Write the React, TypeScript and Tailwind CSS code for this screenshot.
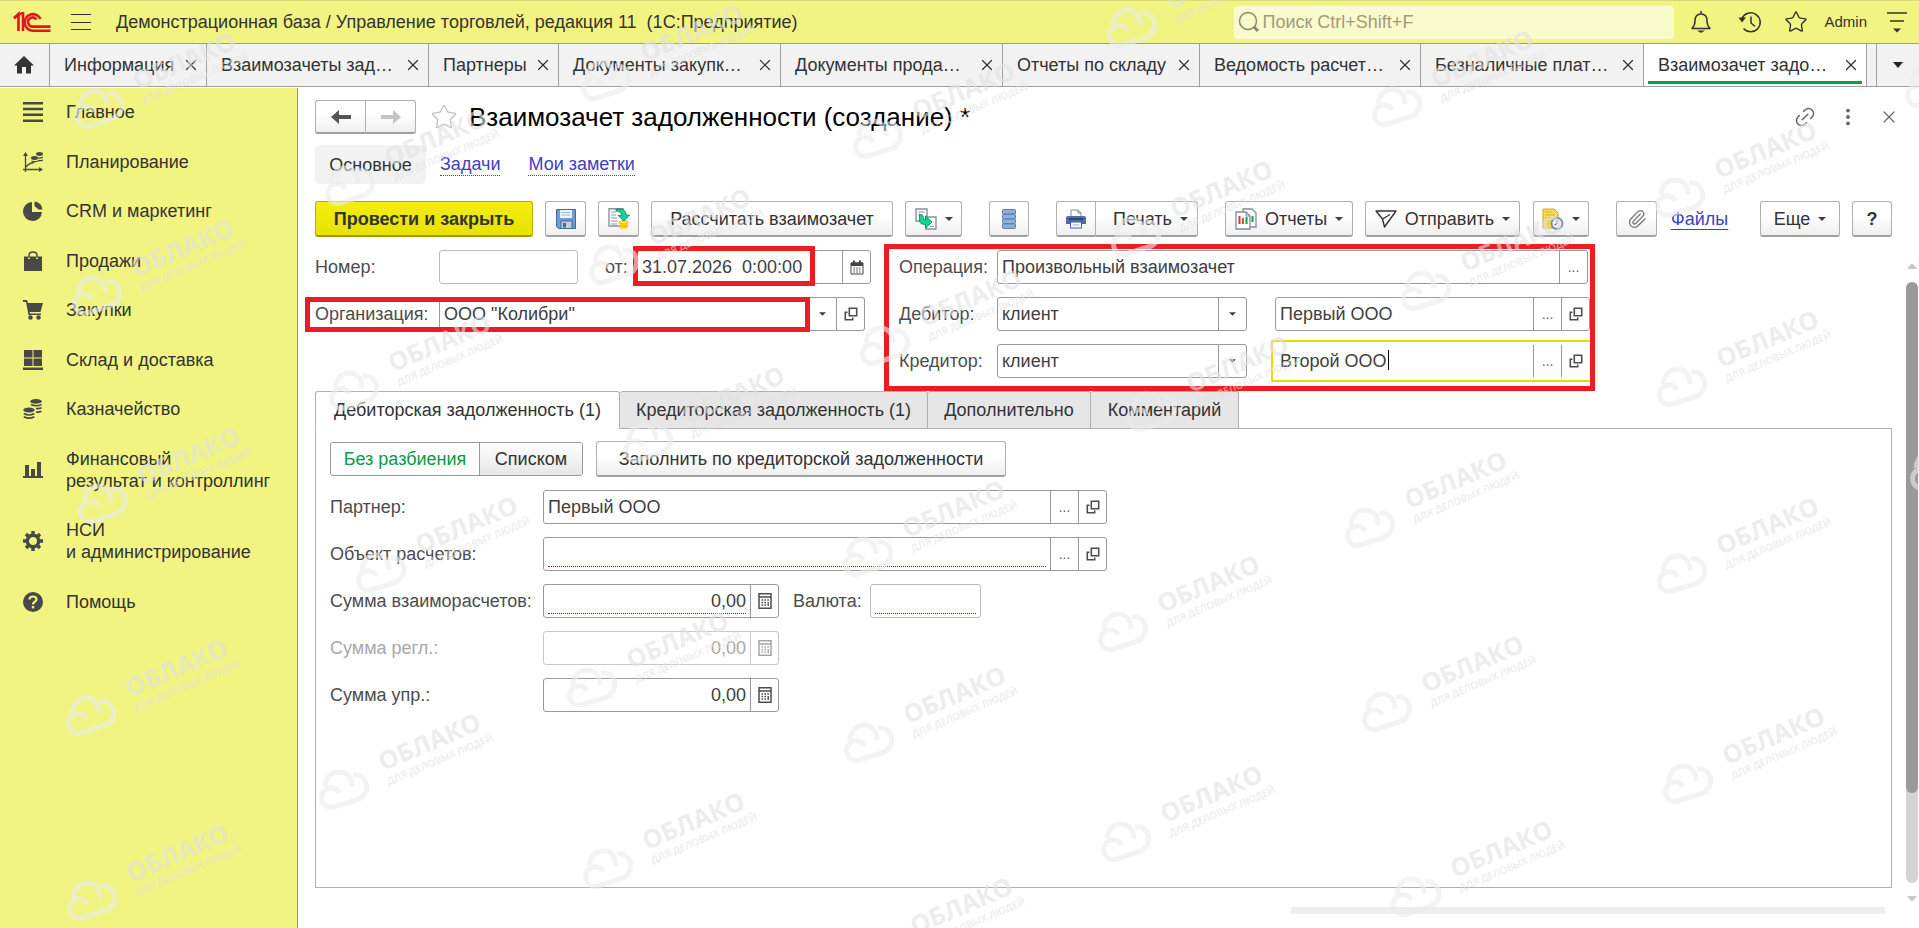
import React from 'react';
import { Link2, MoreVertical, Paperclip, Star, X } from 'lucide-react';

type IconProps = { className?: string };

const LogoIcon = () => (
  <svg viewBox="0 0 38 22" className="w-[38px] h-[22px]" fill="none" stroke="#e5141c" strokeWidth="2.6">
    <path d="M1 7L5.500 3V20M10 1V20" />
    <path d="M1 7.500L9.500 1.500" strokeWidth="2" />
    <path d="M27.500 8A8.300 8.300 0 1 0 20 19.700H37.500" />
    <path d="M23.500 8.500A4.600 4.600 0 1 0 20 15.600H37.500" />
  </svg>
);

const HomeIcon = () => (
  <svg viewBox="0 0 20 18" className="w-5 h-[18px]" fill="#333">
    <path d="M10 0L20 9.500H17V17.500H12V11H8V17.500H3V9.500H0L10 0Z" />
  </svg>
);

const SearchIcon = () => (
  <svg viewBox="0 0 22 22" className="w-[22px] h-[22px] shrink-0" fill="none" stroke="#8a866a">
    <circle cx="10" cy="10" r="8.500" strokeWidth="1.500" />
    <path d="M16 16L20 20" strokeWidth="3" />
  </svg>
);

const BellIcon = () => (
  <svg viewBox="0 0 22 22" className="w-[22px] h-[22px]" fill="none" stroke="#333" strokeWidth="1.500" strokeLinejoin="round">
    <path d="M11 0V3M2 17.500Q5 14.500 5 10Q5 3 11 3Q17 3 17 10Q17 14.500 20 17.500Z" />
    <path d="M7 19.500H15L11 22Z" fill="#333" stroke="none" />
  </svg>
);

const HistoryIcon = () => (
  <svg viewBox="0 0 24 22" className="w-6 h-[22px]" fill="none" stroke="#333" strokeWidth="1.500">
    <path d="M4 7.500A9.500 9.500 0 1 1 5.500 17.500" />
    <path d="M0.500 6.500H8L4 11.500Z" fill="#333" stroke="none" />
    <path d="M13 5.500V12L17 15.500" />
  </svg>
);

const CaretIcon = ({ className = 'w-2 h-1' }: IconProps) => (
  <svg viewBox="0 0 8 4" className={`shrink-0 ${className}`} fill="#404040">
    <path d="M0 0H8L4 4Z" />
  </svg>
);

const OpenIcon = () => (
  <svg viewBox="0 0 14 14" className="w-3.5 h-3.5" fill="none" stroke="#4d4d4d" strokeWidth="1.600">
    <path d="M5.300 1.300H12.700V8.700H5.300Z" />
    <path d="M3.500 5.300H1.300V12.700H8.700V10.500" />
  </svg>
);

const CalendarIcon = () => (
  <svg viewBox="0 0 14 15" className="w-3.5 h-[15px]" fill="none" stroke="#444">
    <path d="M1 3H13V14H1Z" />
    <path d="M1 3.500H13M1 5H13M4 0.500V3M10 0.500V3" strokeWidth="2" />
    <path d="M3.500 8H10.500M3.500 10H10.500M3.500 12H10.500" strokeDasharray="1.500 1.300" />
  </svg>
);

const CalcIcon = () => (
  <svg viewBox="0 0 14 16" className="w-3.5 h-4" fill="none" stroke="#4d4d4d">
    <rect x="1" y="0.750" width="12" height="14.500" strokeWidth="1.500" />
    <path d="M1 4H13" strokeWidth="1.500" />
    <path d="M3.500 7H11M3.500 9.500H8.500M3.500 12H8.500" strokeDasharray="1.600 1.300" strokeWidth="1.400" />
    <path d="M10.200 9V13" strokeWidth="1.400" />
  </svg>
);

const ArrowIcon = ({ className = '' }: IconProps) => (
  <svg viewBox="0 0 20 14" className={`w-5 h-3.5 ${className}`} fill="currentColor">
    <path d="M0 7L8 0V5H20V9H8V14Z" />
  </svg>
);

const SaveIcon = () => (
  <svg viewBox="0 0 20 20" className="w-5 h-5">
    <path d="M0.500 0.500H19.500V19.500H2.500L0.500 17.500Z" fill="#6f9bd2" stroke="#41699e" />
    <rect x="4" y="1" width="12" height="8" fill="#eef4fb" />
    <path d="M5.500 3.500H14.500M5.500 6H14.500" stroke="#9fb6d2" />
    <rect x="5" y="12" width="11" height="7.500" fill="#c6cdd6" stroke="#41699e" />
    <rect x="7" y="14" width="3" height="4.500" fill="#41699e" />
  </svg>
);

const PostIcon = () => (
  <svg viewBox="0 0 22 22" className="w-[22px] h-[22px]">
    <path d="M1 0.800H15V18H1Z" fill="#fff" stroke="#8792a0" strokeWidth="1.400" />
    <path d="M3 4H8M3 7H8M3 10H9M3 13H10M3 16H9" stroke="#8792a0" />
    <path d="M8 1H13Q18 2 18 7H21.500L16 13L10 7.500H13.500Q13 3 8 3Z" fill="#10d494" stroke="#11814f" strokeWidth="0.800" />
    <path d="M11 14V20Q15.500 23 20 20V14Z" fill="#ffe21a" />
    <ellipse cx="15.500" cy="14.500" rx="4.500" ry="1.600" fill="#fff16a" stroke="#d7a900" />
    <path d="M11 17.500Q15.500 20 20 17.500" stroke="#d7a900" fill="none" />
  </svg>
);

const CreateFromIcon = () => (
  <svg viewBox="0 0 22 22" className="w-[22px] h-[22px]">
    <path d="M1 1H12V13H1Z" fill="#fff" stroke="#8792a0" strokeWidth="1.400" />
    <path d="M3.500 4H9.500M3.500 7H8" stroke="#8792a0" />
    <path d="M11 9H21V21H11Z" fill="#fff" stroke="#8792a0" strokeWidth="1.400" />
    <path d="M15 18.500H19" stroke="#8792a0" />
    <path d="M4.500 6V13Q5 16.500 10.500 16.500V20.500L17 14L10.500 8V12Q8 12 8 8Z" fill="#10d494" stroke="#11814f" strokeWidth="0.800" />
  </svg>
);

const RegistersIcon = () => (
  <svg viewBox="0 0 14 20" className="w-3.5 h-5" fill="#8fb2dc" stroke="#5a7ba8">
    <rect x="0.500" y="0.500" width="13" height="4.500" rx="1" />
    <rect x="0.500" y="5.300" width="13" height="4.500" rx="1" />
    <rect x="0.500" y="10.100" width="13" height="4.500" rx="1" />
    <rect x="0.500" y="14.900" width="13" height="4.500" rx="1" />
  </svg>
);

const PrinterIcon = () => (
  <svg viewBox="0 0 20 20" className="w-5 h-5">
    <path d="M5 8V1H12L15 4V8Z" fill="#fff" stroke="#7e8b9c" />
    <path d="M12 1V4H15" fill="none" stroke="#7e8b9c" />
    <path d="M2 7H18Q20 7 20 9V15H0V9Q0 7 2 7Z" fill="#4c6fa8" />
    <path d="M3 10H17" stroke="#1f3a66" strokeWidth="1.500" />
    <path d="M4.500 13H15.500V19H4.500Z" fill="#fff" stroke="#3d5f97" />
    <path d="M6.500 16H13.500" stroke="#9aa7b8" />
  </svg>
);

const ReportIcon = () => (
  <svg viewBox="0 0 22 22" className="w-[22px] h-[22px]">
    <path d="M8 1H17L21 5V19H8Z" fill="#fff" stroke="#7e8b9c" strokeWidth="1.300" />
    <path d="M17.500 8V14" stroke="#13a04b" strokeWidth="2" />
    <path d="M1 4H11L15 8V21H1Z" fill="#fff" stroke="#7e8b9c" strokeWidth="1.300" />
    <path d="M11 4V8H15" fill="none" stroke="#7e8b9c" />
    <path d="M4.500 8V16" stroke="#d23c2a" strokeWidth="2" />
    <path d="M8 10V16" stroke="#e0572e" strokeWidth="2" />
    <path d="M11.500 9V16" stroke="#13a04b" strokeWidth="2" />
  </svg>
);

const SendIcon = () => (
  <svg viewBox="0 0 22 18" className="w-[22px] h-[18px]" fill="none" stroke="#333" strokeWidth="1.400" strokeLinejoin="round">
    <path d="M1 1H21L9.500 17L7.500 9Z" />
    <path d="M7.500 9L15 4.500" />
  </svg>
);

const ReminderIcon = () => (
  <svg viewBox="0 0 22 22" className="w-[22px] h-[22px]">
    <path d="M1 1H12L16 5V20H1Z" fill="#f7dc52" stroke="#d0a92a" />
    <path d="M3 4H10M3 7H13M3 10H10M3 13H8M3 16H8" stroke="#d9b637" />
    <circle cx="15" cy="15.500" r="5.500" fill="#eef5fc" stroke="#6a8cba" strokeWidth="1.800" />
    <path d="M15 12V15.500L12.500 17" fill="none" stroke="#d23c2a" strokeWidth="1.200" />
  </svg>
);

const SideIcon = ({ name }: { name: string }) => (
  <svg viewBox="0 0 20 20" className="w-5 h-5 shrink-0" fill="#484848">
    {name === 'main' && <path d="M0 0H20V2.500H0ZM0 5.800H20V8.300H0ZM0 11.600H20V14.100H0ZM0 17.500H20V20H0Z" />}
    {name === 'plan' && (
      <>
        <path d="M2.500 20V3M0 17.500H18M3 15Q6 11 11 10.500" stroke="#484848" strokeWidth="1.300" fill="none" />
        <path d="M2.500 0L5 4H0ZM20 17.500L16 15V20Z" />
        <ellipse cx="16.500" cy="2" rx="3.500" ry="1.900" />
        <ellipse cx="11.500" cy="6" rx="3.500" ry="1.900" />
        <path d="M14 5.500Q17 7 20 5M15 8.500Q18 9 20 8M8.500 9Q11.500 10.500 15 9" stroke="#484848" strokeWidth="1.300" fill="none" />
      </>
    )}
    {name === 'crm' && <path d="M9 1V11H19A9.500 9.500 0 1 1 9 1ZM11.500 0.500A9 8.500 0 0 1 19.500 8.500H15.500L11.500 5Z" />}
    {name === 'sales' && (
      <>
        <path d="M1 5.500H5V8H7V5.500H13V8H15V5.500H19V20H1Z" />
        <path d="M6 7V4.500Q6 1 10 1Q14 1 14 4.500V7" fill="none" stroke="#484848" strokeWidth="1.500" />
      </>
    )}
    {name === 'buy' && (
      <>
        <path d="M0 0H4L5 3H20L17.500 12H6.500L7 13.500H18V15H5.500L3 2H0Z" />
        <circle cx="7.500" cy="17.500" r="2.200" />
        <circle cx="15.500" cy="17.500" r="2.200" />
      </>
    )}
    {name === 'stock' && <path d="M1 0H9.500V7.500H1ZM10.500 0H19V7.500H10.500ZM1 8.500H9.500V16H1ZM10.500 8.500H19V16H10.500ZM0 17.500H20V20H0Z" />}
    {name === 'cash' && (
      <>
        <ellipse cx="13" cy="2.400" rx="5.700" ry="2.400" />
        <ellipse cx="6" cy="11" rx="5.700" ry="2.400" />
        <path d="M8 5.500Q13 8 18.500 5.500M13 9.500Q16 10 18.500 8.800M13 13Q16 13.500 18.500 12.300M0.800 14.500Q6 17.500 11.300 14.500M0.800 17.700Q6 20.700 11.300 17.700" fill="none" stroke="#484848" strokeWidth="1.700" />
      </>
    )}
    {name === 'finance' && <path d="M2 5H6V16H2ZM8 9H12V16H8ZM14 2H18V16H14ZM0 16H20V18H0Z" />}
    {name === 'settings' && (
      <>
        <circle cx="10" cy="10" r="5.700" fill="none" stroke="#484848" strokeWidth="3.400" />
        <path d="M10 0V4M10 16V20M0 10H4M16 10H20M3 3L5.500 5.500M14.500 14.500L17 17M17 3L14.500 5.500M5.500 14.500L3 17" stroke="#484848" strokeWidth="3.400" />
      </>
    )}
    {name === 'help' && (
      <>
        <circle cx="10" cy="10" r="10" />
        <path d="M6.500 7.500Q6.500 4.500 10 4.500Q13.500 4.500 13.500 7.200Q13.500 8.800 11.500 10Q10 11 10 12.500" fill="none" stroke="#f2f482" strokeWidth="2.200" />
        <rect x="8.800" y="14" width="2.400" height="2.400" fill="#f2f482" />
      </>
    )}
  </svg>
);

const openTabs = [
  { title: 'Информация', width: 'w-[157px]' },
  { title: 'Взаимозачеты зад…', width: 'w-[222px]' },
  { title: 'Партнеры', width: 'w-[130px]' },
  { title: 'Документы закупк…', width: 'w-[222px]' },
  { title: 'Документы прода…', width: 'w-[222px]' },
  { title: 'Отчеты по складу', width: 'w-[197px]' },
  { title: 'Ведомость расчет…', width: 'w-[221px]' },
  { title: 'Безналичные плат…', width: 'w-[223px]' },
  { title: 'Взаимозачет задо…', width: 'w-[223px]', active: true },
];

const sections = [
  { icon: 'main', lines: ['Главное'] },
  { icon: 'plan', lines: ['Планирование'] },
  { icon: 'crm', lines: ['CRM и маркетинг'] },
  { icon: 'sales', lines: ['Продажи'] },
  { icon: 'buy', lines: ['Закупки'] },
  { icon: 'stock', lines: ['Склад и доставка'] },
  { icon: 'cash', lines: ['Казначейство'] },
  { icon: 'finance', lines: ['Финансовый', 'результат и контроллинг'] },
  { icon: 'settings', lines: ['НСИ', 'и администрирование'] },
  { icon: 'help', lines: ['Помощь'] },
];

// centres of the cloud marks
const marks = [
  [99, 108], [606, 80], [350, 185], [97, 295], [103, 503], [91, 715], [92, 900],
  [1132, 27], [878, 138], [1136, 236], [1397, 106], [1680, 197], [1426, 290], [1930, 87],
  [614, 264], [354, 390], [885, 345], [648, 442], [1152, 411], [381, 572], [868, 556],
  [592, 687], [869, 742], [1370, 527], [1123, 631], [1387, 711], [1126, 841], [1416, 896],
  [876, 953], [1682, 386], [1682, 573], [1688, 783], [344, 789], [608, 868], [1935, 470],
];

const Watermarks = () => (
  <div aria-hidden="true" className="absolute inset-0 overflow-hidden pointer-events-none select-none opacity-60 font-['Open_Sans',sans-serif] text-[#e2e2e2] z-20">
    {marks.map(([x, y]) => (
      <div key={`${x}-${y}`} className="absolute" style={{ left: x - 25, top: y - 20 }}>
        <svg viewBox="0 0 50 41" className="w-[50px] h-[41px]" fill="none" stroke="#ececec" strokeWidth="5">
          <path d="M6 18C7 7 14 3 20 3C28 3 33 9 33 18" />
          <path d="M34 6C46 4 52 18 44 27C42 30 38 31 34 32L15 38C5 41 -1 29 5 22C10 17 18 18 20 24" />
        </svg>
        <div className="absolute left-[55px] top-[-19px] origin-top-left -rotate-[23deg] whitespace-nowrap">
          <div className="text-[25px] leading-[26px] font-bold">ОБЛАКО</div>
          <div className="text-[10px] leading-4 font-semibold">ДЛЯ ДЕЛОВЫХ ЛЮДЕЙ</div>
        </div>
      </div>
    ))}
  </div>
);

type BtnProps = { children: React.ReactNode; className?: string; label?: string };

const Btn = ({ children, className = '', label }: BtnProps) => (
  <button
    type="button"
    aria-label={label}
    className={`shrink-0 flex items-center justify-center rounded-[3px] border border-[#b0b0b0] border-b-2 border-b-[#a0a0a0] bg-linear-to-b from-white from-40% to-[#efefef] text-[#333] whitespace-nowrap ${className}`}
  >
    {children}
  </button>
);

type FieldProps = {
  id: string;
  label: string;
  value?: string;
  className?: string;
  inputClass?: string;
  required?: string;
  disabled?: boolean;
  children?: React.ReactNode;
};

const Field = ({ id, label, value = '', className = '', inputClass = '', required, disabled, children }: FieldProps) => (
  <div className={`h-[34px] flex relative rounded-[3px] border bg-white overflow-hidden ${disabled ? 'border-[#c8c8c8]' : 'border-[#999]'} ${className}`}>
    <input
      id={id}
      aria-label={label}
      defaultValue={value}
      disabled={disabled}
      className={`flex-1 min-w-0 px-1 outline-none bg-transparent ${disabled ? 'text-[#a8a8a8]' : 'text-[#404040]'} ${inputClass}`}
    />
    {required && <span className={`absolute left-1 bottom-[3px] border-b border-dotted border-[#d00000] ${required}`} />}
    {children}
  </div>
);

const FieldBtn = ({ label, className = '', children }: BtnProps) => (
  <button type="button" aria-label={label} className={`w-7 shrink-0 flex items-center justify-center border-l border-[#999] text-[#4d4d4d] ${className}`}>
    {children}
  </button>
);

const SelectField = ({ id, value, className = '' }: { id: string; value: string; className?: string }) => (
  <div className={`h-[34px] flex relative rounded-[3px] border border-[#999] bg-white overflow-hidden ${className}`}>
    <select id={id} className="flex-1 appearance-none px-1 outline-none text-[#404040]">
      <option>{value}</option>
    </select>
    <span className="absolute right-0 top-0 h-full w-7 flex items-center justify-center border-l border-[#999] pointer-events-none">
      <CaretIcon className="w-[7px] h-1" />
    </span>
  </div>
);

const Dots = () => <span className="text-[14px] leading-none text-[#666]">...</span>;

const TopBar = () => (
  <header className="h-[44px] shrink-0 flex items-center bg-[#f2f482] border-t border-b border-t-[#d8da7c] border-b-[#a3a36c] pl-[13px] pr-3 text-[#333]">
    <LogoIcon />
    <button type="button" aria-label="Меню" className="ml-5 w-5 h-5 flex flex-col justify-between py-0.5">
      <span className="h-px w-5 bg-[#333]" />
      <span className="h-px w-5 bg-[#333]" />
      <span className="h-px w-5 bg-[#333]" />
    </button>
    <h1 className="ml-[25px] whitespace-pre">Демонстрационная база / Управление торговлей, редакция 11  (1С:Предприятие)</h1>
    <label className="ml-auto w-[440px] h-[33px] flex items-center gap-0.5 rounded-sm bg-[#fafbcd] px-1">
      <SearchIcon />
      <input type="search" aria-label="Поиск" placeholder="Поиск Ctrl+Shift+F" className="flex-1 bg-transparent outline-none placeholder:text-[#a39a7a]" />
    </label>
    <div className="flex items-center ml-4">
      <button type="button" aria-label="Уведомления" className="w-6"><BellIcon /></button>
      <button type="button" aria-label="История" className="w-6 ml-6"><HistoryIcon /></button>
      <button type="button" aria-label="Избранное" className="w-6 ml-[22px]"><Star className="w-6 h-6" strokeWidth={1.4} /></button>
      <a href="#user" className="ml-4 text-[15px]">Admin</a>
      <button type="button" aria-label="Сервис" className="ml-5 w-5 h-6">
        <svg viewBox="0 0 20 24" className="w-5 h-6" stroke="#333" strokeWidth="1.500">
          <path d="M0 3H20M3 11H17" />
          <path d="M6 18.500H14L10 22.500Z" fill="#333" stroke="none" />
        </svg>
      </button>
    </div>
  </header>
);

const TabBar = () => (
  <nav className="h-[43px] shrink-0 flex bg-[#f2f2f2] border-b border-[#a0a0a0] text-[#333]">
    <a href="#home" aria-label="Начальная страница" className="w-[50px] flex items-center justify-center border-r border-[#a0a0a0] pr-0.5">
      <HomeIcon />
    </a>
    {openTabs.map((tab) => (
      <div
        key={tab.title}
        className={`${tab.width} relative flex items-center justify-between pl-3.5 pr-1.5 border-r border-[#a0a0a0] whitespace-nowrap ${tab.active ? 'bg-white' : ''}`}
      >
        <a href="#tab">{tab.title}</a>
        <button type="button" aria-label="Закрыть"><X className="w-[18px] h-[18px]" strokeWidth={1.6} /></button>
        {tab.active && <span className="absolute left-1 right-1 bottom-0.5 h-[3px] bg-[#0aa04a]" />}
      </div>
    ))}
    <span className="w-2.5 border-r border-[#a0a0a0]" />
    <button type="button" aria-label="Все вкладки" className="flex-1 flex items-center justify-center">
      <svg viewBox="0 0 10 6" className="w-2.5 h-1.5" fill="#222"><path d="M0 0H10L5 6Z" /></svg>
    </button>
  </nav>
);

const Sidebar = () => (
  <aside className="w-[298px] shrink-0 mt-px bg-[#f2f482] border-r border-[#999a66] pt-[13px]">
    <nav className="h-[512px] flex flex-col justify-between">
      {sections.map((section) => (
        <a key={section.icon} href="#section" className="flex items-center gap-[23px] pl-[23px] leading-[22px] text-[#333] whitespace-nowrap">
          <SideIcon name={section.icon} />
          <span>
            {section.lines.map((line) => (
              <span key={line} className="block">{line}</span>
            ))}
          </span>
        </a>
      ))}
    </nav>
  </aside>
);

const Toolbar = () => (
  <div className="mt-[17px] flex items-center mr-[7px]">
    <button type="button" className="h-9 w-[218px] rounded-[3px] border border-[#b5b100] border-b-2 border-b-[#a09c00] bg-linear-to-b from-[#f4ee10] to-[#e8e200] font-bold text-[#333]">
      Провести и закрыть
    </button>
    <Btn label="Записать" className="h-9 ml-3 w-[41px]"><SaveIcon /></Btn>
    <Btn label="Провести" className="h-9 ml-3 w-[41px]"><PostIcon /></Btn>
    <Btn className="h-9 ml-3 w-[242px]">Рассчитать взаимозачет</Btn>
    <Btn label="Создать на основании" className="h-9 ml-3 w-[57px] gap-2"><CreateFromIcon /><CaretIcon /></Btn>
    <Btn label="Движения документа" className="h-9 ml-[27px] w-10"><RegistersIcon /></Btn>
    <Btn label="Печать" className="h-9 ml-[27px] w-10 rounded-r-none"><PrinterIcon /></Btn>
    <Btn className="h-9 w-[102px] gap-2 pl-2 rounded-l-none border-l-0">Печать<CaretIcon /></Btn>
    <Btn className="h-9 ml-[27px] w-[128px] gap-2"><ReportIcon />Отчеты<CaretIcon /></Btn>
    <Btn className="h-9 ml-3 w-[155px] gap-2"><SendIcon />Отправить<CaretIcon /></Btn>
    <Btn label="Напоминание" className="h-9 ml-[13px] w-[56px] gap-2"><ReminderIcon /><CaretIcon /></Btn>
    <Btn label="Прикрепить" className="h-9 ml-[27px] w-[41px]"><Paperclip className="w-5 h-5 text-[#777]" strokeWidth={1.6} /></Btn>
    <a href="#files" className="ml-3.5 text-[#3f3fc0] underline underline-offset-4">Файлы</a>
    <Btn className="h-9 ml-auto w-20 gap-2">Еще<CaretIcon /></Btn>
    <Btn label="Справка" className="h-9 ml-3 w-10 font-bold">?</Btn>
  </div>
);

const HeaderFields = () => (
  <div className="mt-[13px] flex gap-7 text-[#4d4d4d]">
    <div className="w-[556px] shrink-0 flex flex-col gap-[13px]">
      <div className="flex items-center">
        <label htmlFor="number" className="w-[124px] shrink-0">Номер:</label>
        <Field id="number" label="Номер" className="w-[139px] shrink-0 border-[#bbb]" />
        <label htmlFor="date" className="ml-[27px] w-8 shrink-0">от:</label>
        <div className="relative flex-1 min-w-0">
          <Field id="date" label="Дата" value="31.07.2026  0:00:00">
            <FieldBtn label="Выбрать дату"><CalendarIcon /></FieldBtn>
          </Field>
          <span className="absolute -left-1 -top-1 w-[182px] h-10 border-5 border-[#ed1c24] pointer-events-none" />
        </div>
      </div>
      <div className="relative flex items-center w-[550px]">
        <label htmlFor="organization" className="w-[124px]">Организация:</label>
        <SelectField id="organization" value={'ООО "Колибри"'} className="flex-1 rounded-r-none" />
        <button type="button" aria-label="Открыть организацию" className="h-[34px] w-7 flex items-center justify-center border border-l-0 border-[#999] rounded-r-[3px]">
          <OpenIcon />
        </button>
        <span className="absolute -left-2.5 top-0 w-[505px] h-[35px] border-5 border-[#ed1c24] pointer-events-none" />
      </div>
    </div>

    <div className="relative w-[691px] shrink-0 flex flex-col gap-[13px]">
      <div className="flex items-center">
        <label htmlFor="operation" className="w-[98px]">Операция:</label>
        <Field id="operation" label="Операция" value="Произвольный взаимозачет" className="flex-1 mr-0.5">
          <FieldBtn label="Выбрать"><Dots /></FieldBtn>
        </Field>
      </div>
      <div className="flex items-center">
        <label htmlFor="debtor-type" className="w-[98px]">Дебитор:</label>
        <SelectField id="debtor-type" value="клиент" className="w-[250px]" />
        <Field id="debtor" label="Дебитор" value="Первый ООО" className="ml-7 flex-1">
          <FieldBtn label="Выбрать"><Dots /></FieldBtn>
          <FieldBtn label="Открыть"><OpenIcon /></FieldBtn>
        </Field>
      </div>
      <div className="flex items-center">
        <label htmlFor="creditor-type" className="w-[98px]">Кредитор:</label>
        <SelectField id="creditor-type" value="клиент" className="w-[250px]" />
        <div className="relative ml-7 flex-1">
          <Field id="creditor" label="Кредитор" value="Второй ООО" className="border-transparent">
            <FieldBtn label="Выбрать"><Dots /></FieldBtn>
            <FieldBtn label="Открыть"><OpenIcon /></FieldBtn>
          </Field>
          <span className="absolute -inset-1 border-2 border-[#f2d600] pointer-events-none" />
          <span className="absolute left-[113px] top-1.5 h-5 w-px bg-black" />
        </div>
      </div>
      <span className="absolute -left-[15px] -right-[5px] -top-1.5 h-[147px] border-5 border-[#ed1c24] pointer-events-none" />
    </div>
  </div>
);

const pageTabs = [
  { title: 'Дебиторская задолженность (1)', width: 'w-[305px]' },
  { title: 'Кредиторская задолженность (1)', width: 'w-[308px]' },
  { title: 'Дополнительно', width: 'w-[163px]' },
  { title: 'Комментарий', width: 'w-[148px]' },
];

const DebtPanel = () => (
  <section className="flex-1 -mt-px border border-[#b0b0b0] pl-3.5 pt-3 text-[#4d4d4d]">
    <div className="flex items-center">
      <div className="flex h-[34px] rounded-[3px] border border-[#999] overflow-hidden">
        <button type="button" className="w-[148px] text-[#0a9a44]">Без разбиения</button>
        <button type="button" className="w-[103px] border-l border-[#999] bg-linear-to-b from-white to-[#e6e6e6] text-[#333]">Списком</button>
      </div>
      <Btn className="h-9 ml-[13px] w-[410px]">Заполнить по кредиторской задолженности</Btn>
    </div>
    <div className="mt-[13px] flex flex-col gap-[13px]">
      <div className="flex items-center">
        <label htmlFor="partner" className="w-[213px]">Партнер:</label>
        <Field id="partner" label="Партнер" value="Первый ООО" className="w-[564px]">
          <FieldBtn label="Выбрать"><Dots /></FieldBtn>
          <FieldBtn label="Открыть"><OpenIcon /></FieldBtn>
        </Field>
      </div>
      <div className="flex items-center">
        <label htmlFor="object" className="w-[213px]">Объект расчетов:</label>
        <Field id="object" label="Объект расчетов" required="right-[60px]" className="w-[564px]">
          <FieldBtn label="Выбрать"><Dots /></FieldBtn>
          <FieldBtn label="Открыть"><OpenIcon /></FieldBtn>
        </Field>
      </div>
      <div className="flex items-center">
        <label htmlFor="sum" className="w-[213px] whitespace-nowrap">Сумма взаиморасчетов:</label>
        <Field id="sum" label="Сумма взаиморасчетов" value="0,00" required="right-8" className="w-[236px]" inputClass="text-right">
          <FieldBtn label="Калькулятор"><CalcIcon /></FieldBtn>
        </Field>
        <label htmlFor="currency" className="ml-3.5 w-[77px]">Валюта:</label>
        <Field id="currency" label="Валюта" required="right-1" className="w-[111px] border-[#bbb]" />
      </div>
      <div className="flex items-center">
        <label htmlFor="sum-regl" className="w-[213px] text-[#a8a8a8]">Сумма регл.:</label>
        <Field id="sum-regl" label="Сумма регл." value="0,00" disabled className="w-[236px]" inputClass="text-right">
          <FieldBtn label="Калькулятор" className="opacity-50"><CalcIcon /></FieldBtn>
        </Field>
      </div>
      <div className="flex items-center">
        <label htmlFor="sum-upr" className="w-[213px]">Сумма упр.:</label>
        <Field id="sum-upr" label="Сумма упр." value="0,00" className="w-[236px]" inputClass="text-right">
          <FieldBtn label="Калькулятор"><CalcIcon /></FieldBtn>
        </Field>
      </div>
    </div>
  </section>
);

const App: React.FC = () => {
  return (
    <div className="relative min-h-screen flex flex-col overflow-hidden bg-white font-['Liberation_Sans',Arial,sans-serif] text-[18px] leading-[22px]">
      <TopBar />
      <TabBar />
      <div className="flex-1 flex">
        <Sidebar />
        <main className="flex-1 min-w-0 flex flex-col pl-[17px] pr-[7px] pt-[13px]">
          <div className="flex items-center">
            <div className="flex">
              <Btn label="Назад" className="w-[51px] h-[34px] rounded-r-none"><ArrowIcon className="text-[#555]" /></Btn>
              <Btn label="Вперед" className="w-[50px] h-[34px] rounded-l-none border-l-0"><ArrowIcon className="text-[#c4c4c4] rotate-180" /></Btn>
            </div>
            <button type="button" aria-label="В избранное" className="ml-3.5">
              <Star className="w-7 h-7 text-[#c0c0c0]" strokeWidth={1.1} />
            </button>
            <h2 className="ml-[11px] text-[26px] leading-7 text-black whitespace-nowrap">Взаимозачет задолженности (создание) *</h2>
            <div className="ml-auto flex items-center gap-5 text-[#666]">
              <button type="button" aria-label="Ссылка"><Link2 className="w-6 h-6 -rotate-45" strokeWidth={1.5} /></button>
              <button type="button" aria-label="Еще"><MoreVertical className="w-[22px] h-[22px]" strokeWidth={2.2} /></button>
              <button type="button" aria-label="Закрыть"><X className="w-5 h-5" strokeWidth={1.4} /></button>
            </div>
          </div>

          <nav className="mt-[11px] flex items-center">
            <a href="#main" className="h-[39px] w-[111px] flex items-center justify-center rounded-[5px] bg-[#f2f2f2] text-[#333]">Основное</a>
            <a href="#tasks" className="ml-3.5 text-[#3f3fc0] border-b border-dotted border-[#3f3fc0]">Задачи</a>
            <a href="#notes" className="ml-7 text-[#3f3fc0] border-b border-dotted border-[#3f3fc0]">Мои заметки</a>
          </nav>

          <Toolbar />
          <HeaderFields />

          <div className="mt-[13px] mr-[7px] flex-1 flex flex-col">
            <div className="relative z-10 flex">
              {pageTabs.map((tab, index) => (
                <button
                  key={tab.title}
                  type="button"
                  className={`${tab.width} h-[38px] border border-[#b0b0b0] rounded-t-[3px] text-[#333] whitespace-nowrap ${index === 0 ? 'bg-white border-b-white' : 'bg-[#e6e6e6] border-l-0'}`}
                >
                  {tab.title}
                </button>
              ))}
            </div>
            <DebtPanel />
          </div>
          <div className="mt-[19px] mb-3.5 mr-3.5 self-end w-[594px] h-[7px] bg-[#eee]" />
        </main>

        <div aria-hidden="true" className="w-[13px] shrink-0 flex flex-col pt-44 pb-[26px]">
          <svg viewBox="0 0 10 6" className="w-2.5 h-1.5 ml-px mb-[13px]" fill="#c8c8c8"><path d="M0 6H10L5 0Z" /></svg>
          <div className="w-3 flex-1 rounded-full bg-[#d4d4d4]">
            <div className="h-[85%] rounded-full bg-[#9a9a9a]" />
          </div>
          <svg viewBox="0 0 10 6" className="w-2.5 h-1.5 ml-px mt-[13px]" fill="#c8c8c8"><path d="M0 0H10L5 6Z" /></svg>
        </div>
      </div>
      <Watermarks />
    </div>
  );
};

export default App;
